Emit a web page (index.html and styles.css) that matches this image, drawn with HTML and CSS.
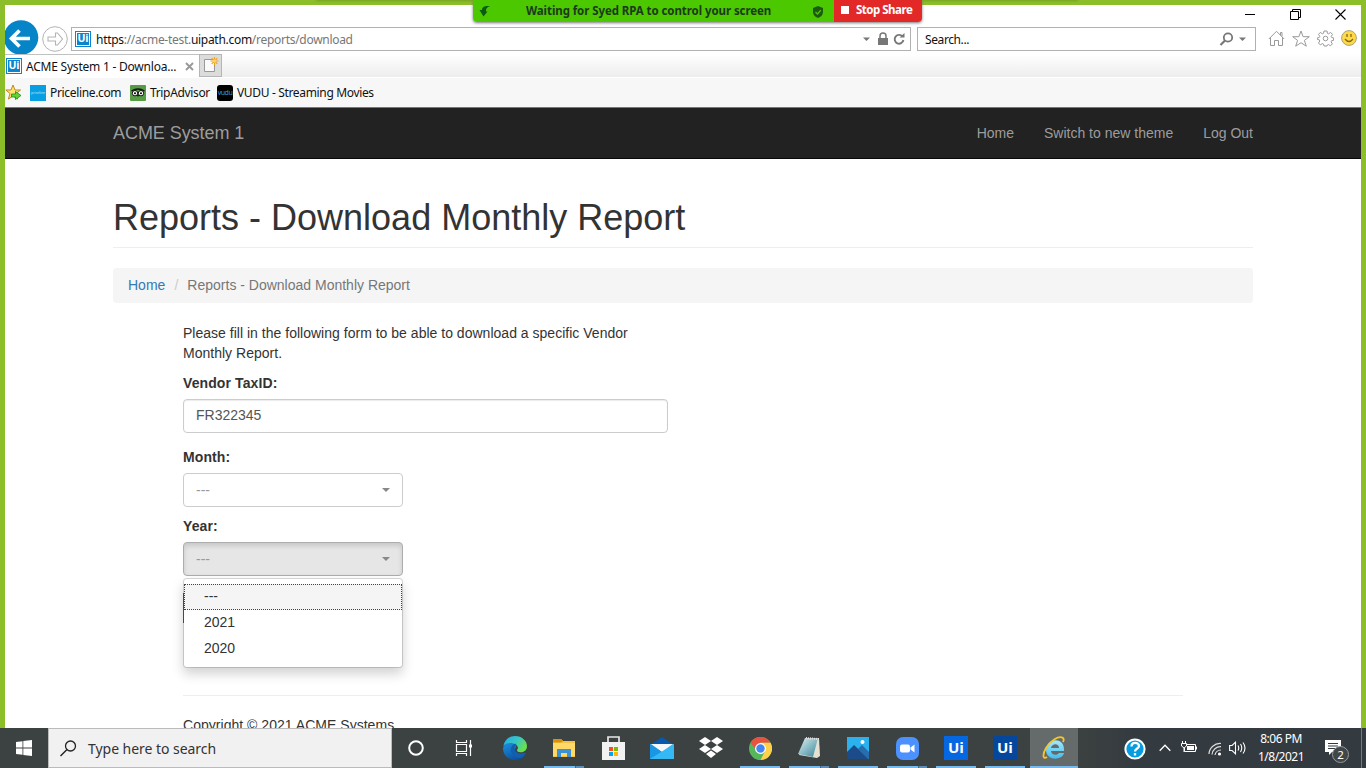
FILE: index.html
```html
<!DOCTYPE html>
<html lang="en">
<head>
<meta charset="utf-8">
<title>ACME System 1 - Download Monthly Report</title>
<link rel="stylesheet" href="styles.css">
</head>
<body>
<div class="desktop">
  <div class="share-tab"></div>
  <div class="share-bar">
    <div class="share-msg">
      <svg class="share-arrow" width="12" height="12" viewBox="0 0 12 12"><path d="M11 1C5.500 .5 3 2 3 5H.5l4 6.500 4-5H7C6.500 4 8 2 11 1Z" fill="#0b5c12"/></svg>
      <span class="share-text">Waiting for Syed RPA to control your screen</span>
      <svg class="share-shield" width="12" height="12" viewBox="0 0 12 12"><path d="M6 0 11 2V6C11 9 9 11 6 12 3 11 1 9 1 6V2Z" fill="#1c5a14"/><path d="m3.500 6 2 2 3.300-3.700" fill="none" stroke="#4bc800" stroke-width="1.300"/></svg>
    </div>
    <div class="share-stop"><i class="stop-square"></i><span>Stop Share</span></div>
  </div>

  <div class="browser">
    <div class="titlebar">
      <svg width="11" height="11" viewBox="0 0 11 11"><path d="M0 5.500H10" stroke="#000"/></svg>
      <svg width="11" height="11" viewBox="0 0 11 11"><path d="M.5 2.500h8v8h-8zM2.500 2.500v-2h8v8h-2" fill="none" stroke="#000"/></svg>
      <svg width="11" height="11" viewBox="0 0 11 11"><path d="m.5.500 10 10m0-10-10 10" stroke="#000" stroke-width="1.100"/></svg>
    </div>
    <div class="address-row">
      <svg class="back" width="34" height="34" viewBox="0 0 34 34"><circle cx="16" cy="17.500" r="17.300" fill="#0584c7"/><path d="M25 18.500H7m7.500-8-8 8 8 8" fill="none" stroke="#fff" stroke-width="3.700"/></svg>
      <svg class="forward" width="26" height="26" viewBox="0 0 26 26"><circle cx="13" cy="13" r="12.300" fill="#fff" stroke="#b4b4b4"/><path d="M6 11h7.500V7h2l5 6-5 6h-2v-4H6z" fill="#fff" stroke="#b4b4b4" stroke-width="1.100"/></svg>
      <div class="address">
        <span class="fav-ui">Ui</span>
        <span class="url"><b>https</b>://acme-test.<b>uipath.com</b>/reports/download</span>
        <svg class="addr-icons" width="44" height="16" viewBox="0 0 44 16"><path d="M0 6.500h7L3.500 10z" fill="#777"/><path d="M15 7h10v7H15z" fill="#777"/><path d="M17 8V5a3 3 0 0 1 6 0v3" fill="none" stroke="#777" stroke-width="1.500"/><path d="M39.500 5.500A4.400 4.400 0 1 0 40.400 9" fill="none" stroke="#777" stroke-width="1.900"/><path d="M36.500 6.500h5V2z" fill="#777"/></svg>
      </div>
      <div class="search">
        <span>Search...</span>
        <svg width="28" height="16" viewBox="0 0 28 16"><circle cx="9" cy="6.500" r="4.200" fill="none" stroke="#777" stroke-width="1.800"/><path d="m6 9.500-4.500 4.500" stroke="#777" stroke-width="2.200"/><path d="M20 6.500h7L23.500 10z" fill="#777"/></svg>
      </div>
      <div class="tools">
        <svg width="17" height="17" viewBox="0 0 17 17"><path d="M.8 9 8.500 1.300 16.200 9M2.500 7.500v8h4v-5h4v5h4v-8M12.500 5V2.500h1.500v4" fill="none" stroke="#999"/></svg>
        <svg width="18" height="17" viewBox="0 0 18 17"><path d="m9 1 2.100 5.700h6.200l-4.900 3.700 1.900 5.800L9 12.700l-5.300 3.500 1.900-5.800L.7 6.700h6.200z" fill="none" stroke="#999"/></svg>
        <svg width="17" height="17" viewBox="0 0 17 17"><path d="m7 1h3l.4 2.300 1.200.5 2-1.400 1.900 2-1.300 2 .4 1 2 .5v2.400l-2 .4-.5 1.200 1.300 2-1.900 1.900-2-1.300-1.100.5L10 16H7l-.5-1.900-1.200-.5-2 1.300-1.800-1.900 1.300-2-.5-1.200-2-.4V7.900l2-.5.500-1-1.300-2 1.800-2 2 1.400 1.200-.5z" fill="none" stroke="#999"/><circle cx="8.500" cy="8.500" r="2.300" fill="none" stroke="#999"/></svg>
        <svg width="16" height="16" viewBox="0 0 16 16"><circle cx="8" cy="8" r="7.400" fill="#ffda47" stroke="#a9a27b"/><path d="M6 4v3M10 4v3M4 9q4 5 8 0" fill="none" stroke="#846819" stroke-width="1.300"/></svg>
      </div>
    </div>
    <div class="tab-row">
      <div class="tab">
        <span class="fav-ui">Ui</span><span class="tab-title">ACME System 1 - Downloa...</span>
        <svg width="9" height="9" viewBox="0 0 9 9"><path d="m1 1 7 7m0-7-7 7" stroke="#999" stroke-width="1.900"/></svg>
      </div>
      <div class="new-tab"><svg width="16" height="17" viewBox="0 0 16 17"><path d="M.5 3.500h10v12H.5z" fill="#fafafa" stroke="#999"/><path d="M10.500 1v8M6.500 5h8M7.700 2.200l5.600 5.600m0-5.600L7.700 7.800" stroke="#eda326" stroke-width="1.200"/><circle cx="10.500" cy="5" r="1.700" fill="#ffd55d"/></svg></div>
    </div>
    <div class="favorites">
      <svg class="fav-add" width="17" height="17" viewBox="0 0 17 17"><path d="m8 1 2 5h5.500l-4.400 3.500 1.600 5.500L8 12l-4.600 3 1.600-5.500L.8 6H6z" fill="#ffe36c" stroke="#bd8928"/><path d="M6.500 10h4V7.500l5.500 4-5.500 4V13h-4z" fill="#62d531" stroke="#218a1d" stroke-width=".8"/></svg>
      <span class="bookmark b1"><i class="fav-price"><em>priceline</em></i>Priceline.com</span>
      <span class="bookmark b2"><svg width="16" height="16" viewBox="0 0 16 16"><rect width="16" height="16" rx="1" fill="#579b45"/><path d="M1.500 6Q8 2 14.500 6" fill="none" stroke="#111" stroke-width="1.400"/><circle cx="5" cy="8.200" r="2.700" fill="#fff" stroke="#111"/><circle cx="11" cy="8.200" r="2.700" fill="#fff" stroke="#111"/><circle cx="5" cy="8.200" r="1"/><circle cx="11" cy="8.200" r="1"/><path d="m7 10 1 2 1-2"/></svg>TripAdvisor</span>
      <span class="bookmark b3"><i class="fav-vudu">vudu</i>VUDU - Streaming Movies</span>
    </div>

    <div class="page">
      <nav class="navbar"><div class="container nav-inner"><a class="brand">ACME System 1</a><div class="nav-links"><a>Home</a><a>Switch to new theme</a><a>Log Out</a></div></div></nav>
      <main class="container">
        <h1 class="page-header">Reports - Download Monthly Report</h1>
        <div class="breadcrumb"><a class="crumb-link">Home</a><span class="slash">/</span><span class="crumb-active">Reports - Download Monthly Report</span></div>
        <div class="form">
          <p class="intro">Please fill in the following form to be able to download a specific Vendor Monthly Report.</p>
          <label class="label">Vendor TaxID:</label>
          <div class="input">FR322345</div>
          <label class="label month">Month:</label>
          <div class="select"><span>---</span><i class="caret"></i></div>
          <label class="label year">Year:</label>
          <div class="year-group">
            <div class="select open"><span>---</span><i class="caret"></i></div>
            <div class="menu"><div class="item focused">---</div><div class="item">2021</div><div class="item">2020</div></div>
          </div>
          <div class="submit"></div>
          <hr class="rule">
          <p class="copyright">Copyright © 2021 ACME Systems</p>
        </div>
      </main>
    </div>
  </div>

  <div class="taskbar">
    <div class="start"><svg width="16" height="16" viewBox="0 0 16 16"><path d="m0 2 6.500-.8v6.300H0zM7.300 1.100 16 0v7.500H7.300zM0 8.400h6.500v6.300L0 13.900zM7.300 8.400H16V16l-8.700-1.100z" fill="#fff"/></svg></div>
    <div class="task-search"><svg width="17" height="17" viewBox="0 0 17 17"><circle cx="10.500" cy="6" r="5" fill="none" stroke="#222" stroke-width="1.300"/><path d="m7 9.500-6.500 6.500" stroke="#222" stroke-width="1.400"/></svg><span>Type here to search</span></div>
    <div class="sys"><svg width="18" height="18" viewBox="0 0 18 18"><circle cx="9" cy="9" r="6.800" fill="none" stroke="#fff" stroke-width="2"/></svg></div>
    <div class="sys"><svg width="18" height="18" viewBox="0 0 18 18"><path d="M1.500 1v2.500h10V1M1.500 17v-2.500h10V17M1.500 5.500h10v7h-10zM15.500 1v16" fill="none" stroke="#fff" stroke-width="1.200"/><path d="M14 5.500h3v3h-3z" fill="#fff"/></svg></div>
    <div class="apps">
      <div class="app"><svg width="24" height="24" viewBox="0 0 24 24"><defs><linearGradient id="edgeTop" x1="0" x2="1" y1="0" y2=".5"><stop stop-color="#27a8e8"/><stop offset=".55" stop-color="#36c6c8"/><stop offset="1" stop-color="#69df50"/></linearGradient><linearGradient id="edgeBase" x1="0" x2=".6" y1="0" y2="1"><stop stop-color="#1b92df"/><stop offset="1" stop-color="#0c4e9e"/></linearGradient></defs><path d="M0 12c1-4 5-6 9-5 4 0 5 4 3 6-2 4 4 7 11 4-2 5-6 7-11 7C5 24 0 19 0 12Z" fill="url(#edgeBase)"/><path d="M.3 10C2 3 7 0 12 0c7 0 12 5 12 10 0 5-4 7-8 6-3-1-2-2-1-4C15 8 6 4 .3 10Z" fill="url(#edgeTop)"/><path d="M8.500 11c-2.500 6 3 12 9 11 3-1 5-4 5-6-5 3-11 1-11-4 0-2 1-3 2-4-2-1-4 1-5 3Z" fill="#125fae"/></svg></div>
      <div class="app running split"><svg width="22" height="20" viewBox="0 0 22 20"><path d="M0 1h8l2 2h12v16H0z" fill="#f6c248"/><path d="M0 1h8l2 2-2 1.500H0z" fill="#d99206"/><path d="M0 5h22v13H0z" fill="#ffd968"/><path d="M4 11h14v8h-4v-4H8v4H4z" fill="#3c91d2"/></svg></div>
      <div class="app"><svg width="24" height="24" viewBox="0 0 24 24"><path d="M7 7V1h11v6" fill="none" stroke="#e8e8e8" stroke-width="1.700"/><path d="M1 6h23v18H1z" fill="#f2f2f2"/><path d="M8 11h4v4H8z" fill="#f25022"/><path d="M13 11h4v4h-4z" fill="#7fba00"/><path d="M8 16h4v4H8z" fill="#00a4ef"/><path d="M13 16h4v4h-4z" fill="#ffb900"/></svg></div>
      <div class="app"><svg width="24" height="24" viewBox="0 0 24 24"><path d="m0 9 12-8 12 8z" fill="#0759ad"/><path d="M0 8h24v15H0z" fill="#2ba9ed"/><path d="M1 8h22L12 16z" fill="#f5f7fa"/><path d="m0 8 12 8-12 7z" fill="#1b96e3"/><path d="m24 8-24 15h24z" fill="#35b9f4"/></svg></div>
      <div class="app"><svg width="24" height="24" viewBox="0 0 24 24"><path d="m6 1 6 4-6 4-6-4zM18 1l6 4-6 4-6-4zM6 9l6 4-6 4-6-4zM18 9l6 4-6 4-6-4zM12 14.500l5 3.500-5 4-5-4z" fill="#fff"/></svg></div>
      <div class="app running"><svg width="23" height="23" viewBox="0 0 24 24"><circle cx="12" cy="12" r="12" fill="#57b65a"/><path d="M1.600 6A12 12 0 0 1 22.400 6H12L8 14z" fill="#e85242"/><path d="M22.400 6A12 12 0 0 1 12 24L17 14 12 6z" fill="#ffd14b"/><circle cx="12" cy="12" r="5.700" fill="#fff"/><circle cx="12" cy="12" r="4.400" fill="#4385f5"/></svg></div>
      <div class="app running split"><svg width="24" height="24" viewBox="0 0 24 24"><defs><linearGradient id="note" x2="1" y2="1"><stop stop-color="#dff4f4"/><stop offset="1" stop-color="#378398"/></linearGradient></defs><path d="M9 2h13l1 18-3 2L2 19z" fill="#e5e1d2"/><path d="M8 2h13l-5 19-15-3z" fill="url(#note)"/><path d="m9 2 12 1" stroke="#ddd" stroke-width="2" stroke-dasharray="1 1"/></svg></div>
      <div class="app running"><svg width="22" height="22" viewBox="0 0 22 22"><path d="M0 0h22v22H0z" fill="#2bb1ed"/><path d="m0 15 7-7 15 14H0z" fill="#1b4b89"/><path d="m11 12 4-4 7 7v7h-1z" fill="#286dad"/><circle cx="15.500" cy="5" r="2" fill="#fff"/></svg></div>
      <div class="app running split"><svg width="23" height="23" viewBox="0 0 23 23"><rect width="23" height="23" rx="7" fill="#4b91ff"/><rect x="4" y="7.500" width="10" height="8" rx="2" fill="#fff"/><path d="m14.500 10.500 4-3v8l-4-3z" fill="#fff"/></svg></div>
      <div class="app running"><span class="ui-tile">Ui</span></div>
      <div class="app running"><span class="ui-tile dark">Ui</span></div>
      <div class="app running active"><svg width="24" height="24" viewBox="0 0 24 24"><defs><linearGradient id="ieBlue" x2="0" y2="1"><stop stop-color="#a5e9fb"/><stop offset="1" stop-color="#42bcec"/></linearGradient></defs><path fill-rule="evenodd" d="M22 15H9c0 4 6 5 8 2h5c-2 8-18 8-18-3C4 2 23 0 22 15ZM9 12h8c0-5-7-5-8 0Z" fill="url(#ieBlue)"/><path d="M5 21C1 24 0 19 4 12 8 5 17-1 21 2c1 1 1 2 0 4" fill="none" stroke="#f5c52a" stroke-width="1.800"/></svg></div>
    </div>
    <div class="tray">
      <svg class="help" width="22" height="22" viewBox="0 0 22 22"><circle cx="11" cy="11" r="9.600" fill="#069de0" stroke="#fff" stroke-width="2"/><path d="M7.500 8.500c0-5 7.500-4.500 7.500-.5 0 2.500-4 2.500-4 5.500M11 15v2.500" fill="none" stroke="#fff" stroke-width="2.300"/></svg>
      <svg class="chevron" width="12" height="8" viewBox="0 0 12 8"><path d="m.7 6.700 5.300-5.500 5.300 5.500" fill="none" stroke="#fff" stroke-width="1.300"/></svg>
      <svg class="battery" width="16" height="14" viewBox="0 0 16 14"><path d="M5 3.500h9.500v7H3.500V7M15.500 5.500v3M1.500 0v2m3-2v2M.5 2.500h5V5L3.500 6.500h-1L.5 5zM3 6v5" fill="none" stroke="#fff"/><path d="M6 5h7v4H6z" fill="#fff"/></svg>
      <svg class="wifi" width="14" height="14" viewBox="0 0 14 14"><g fill="none" stroke="#ddd" stroke-width="1.200"><path d="M1 12A11 11 0 0 1 13 1.500"/><path d="M4 12.500A8.500 8.500 0 0 1 13 4.700"/><path d="M7 13A6 6 0 0 1 13 8"/></g><circle cx="11.500" cy="12" r="1.600" fill="#fff"/></svg>
      <svg class="sound" width="17" height="14" viewBox="0 0 17 14"><path d="M.6 4.500h2.500l3.400-3.300v11.600L3.100 9.500H.6zM9 4.500q1.500 2.500 0 5M11.500 3q2.500 4 0 8M14 1.500q4 5.500 0 11" fill="none" stroke="#fff" stroke-width="1.100"/></svg>
      <div class="clock"><span>8:06 PM</span><span class="date">1/8/2021</span></div>
      <div class="notify"><svg width="17" height="16" viewBox="0 0 17 16"><path d="M0 0h16v12H7l-3 3v-3H0z" fill="#fff"/><path d="M3 3.500h10M3 6h10M3 8.500h7" stroke="#343b40"/></svg><span class="badge">2</span></div>
      <div class="peek"></div>
    </div>
  </div>
</div>
</body>
</html>
```
FILE: styles.css
```css
* { box-sizing: border-box; }
body { margin: 0; font-family: "Liberation Sans", Arial, sans-serif; }
svg { display: block; flex: none; }
.desktop { position: relative; width: 1366px; height: 768px; overflow: hidden; background: #8cbe29; display: flex; flex-direction: column; }
.share-tab { position: absolute; left: 316px; top: -1px; width: 762px; height: 1px; box-shadow: 0 0 3px #456210; }
.share-bar { position: absolute; z-index: 3; left: 473px; top: 0; width: 449px; height: 22px; display: flex; border-radius: 0 0 4px 4px; overflow: hidden; font: bold 12px/22px "Noto Sans", sans-serif; box-shadow: 0 1px 3px #777; white-space: nowrap; }
.share-msg { width: 361px; background: #4bc800; color: #1c3a1c; display: flex; align-items: center; padding-left: 6px; }
.share-arrow { margin-top: -1px; }
.share-shield { margin-top: 2px; }
.share-text { width: 245px; margin: 0 41px 0 35px; font-size: 11.500px; letter-spacing: -.08px; }
.share-stop { flex: 1; background: #e32828; color: #fff; display: flex; align-items: center; padding: 0 0 2px 7px; gap: 7px; font-size: 11.500px; letter-spacing: -.5px; }
.stop-square { width: 8px; height: 8px; background: #fff; }

.browser { flex: none; height: 728px; padding: 5px 5px 0; display: flex; flex-direction: column; overflow: hidden; }
.browser > div { flex: none; background: #fff; }
.titlebar { height: 15px; display: flex; justify-content: flex-end; gap: 34px; padding: 4px 15px 0 0; }
.address-row { height: 34px; display: flex; align-items: flex-start; }
.forward { margin: 6px 0 0 3px; }
.address, .search { height: 24px; border: 1px solid #b1b1b1; background: #fff; margin-top: 7px; display: flex; align-items: center; font: 12px/20px "Noto Sans", sans-serif; color: #111; }
.address { width: 840px; margin-left: 3px; padding: 0 3px 0 3px; }
.address .url, .search span { margin-top: 2px; }
.fav-ui { flex: none; width: 16px; height: 16px; border: 1px solid #0c85cc; box-shadow: inset 0 0 0 1px #fff; background: #0c85cc; color: #fff; font: bold 10.500px/13px "Open Sans", sans-serif; text-align: center; }
.url { margin-left: 5px; color: #777; letter-spacing: -.29px; white-space: nowrap; }
.url b { font-weight: 400; color: #111; }
.addr-icons { margin-left: auto; }
.search { width: 339px; margin-left: 6px; padding: 0 8px 0 7px; justify-content: space-between; letter-spacing: -.4px; }
.tools { display: flex; gap: 7px; margin: 10px 0 0 12px; }
.browser > .tab-row { height: 23px; display: flex; background: linear-gradient(#fff, #ededed); }
.tab { width: 194px; height: 23px; background: #fff; border-top: 1px solid #c1c1c1; display: flex; align-items: center; padding-left: 1px; font: 12px/20px "Noto Sans", sans-serif; color: #111; white-space: nowrap; }
.tab-title { width: 154px; margin: 2px 5px 0 4px; letter-spacing: -.22px; }
.new-tab { width: 23px; border: 1px solid #b5b5b5; background: #dcdcdc; padding: 1px 0 0 4px; }
.browser > .favorites { height: 31px; background: #f7f7f7; border-top: 1px solid #fff; border-bottom: 1px solid #777; display: flex; align-items: center; font: 12px/20px "Noto Sans", sans-serif; color: #111; white-space: nowrap; }
.bookmark { display: flex; gap: 4px; align-items: center; letter-spacing: -.34px; padding-top: 1px; }
.b1 { width: 100px; margin-left: 8px; }
.b2 { width: 87px; }
.fav-price { width: 16px; height: 16px; background: #079ee2; color: #bce8ff; overflow: hidden; font-style: normal; }
.fav-price em { display: block; font: 3.500px/16px "Noto Sans", sans-serif; letter-spacing: 0; text-align: center; }
.fav-vudu { width: 16px; height: 16px; border-radius: 3px; background: #000; color: #2b9bea; font: 7px/15px "Noto Sans", sans-serif; text-align: center; letter-spacing: -.5px; }

.page { height: 620px; overflow: hidden; color: #333; font-size: 14px; line-height: 20px; }
.container { width: 1140px; margin: 0 auto 0 108px; }
.navbar { height: 51px; background: #222; border-bottom: 1px solid #080808; color: #9d9d9d; }
.nav-inner { display: flex; justify-content: space-between; align-items: center; height: 50px; }
.brand { font-size: 18px; letter-spacing: -.06px; }
.nav-links { display: flex; gap: 30px; }
.page-header { height: 50px; margin: 39px 0 20px; padding-bottom: 9px; border-bottom: 1px solid #eee; font-size: 36px; font-weight: 400; line-height: 39.600px; }
.breadcrumb { height: 35px; padding: 7px 15px; border-radius: 4px; background: #f5f5f5; display: flex; color: #777; }
.crumb-link { color: #337ab7; }
.slash { width: 22px; text-align: center; color: #ccc; }
.form { margin: 20px 70px 0; }
.intro { width: 485px; margin: 0 0 10px; letter-spacing: .015px; }
.label { display: block; font-weight: 700; margin-bottom: 6px; letter-spacing: .1px; }
.input { width: 485px; height: 34px; border: 1px solid #ccc; border-radius: 4px; box-shadow: inset 0 1px 1px #ececec; padding: 5px 12px; color: #555; }
.month { margin-top: 14px; }
.year { margin-top: 9px; }
.select { width: 220px; height: 34px; border: 1px solid #ccc; border-radius: 4px; background: #fff; color: #999; padding: 0 12px; display: flex; align-items: center; justify-content: space-between; }
.open { background: #e6e6e6; border-color: #adadad; box-shadow: inset 0 3px 5px #0002; }
.caret { border: 4px solid transparent; border-top-color: #888; border-bottom: 0; }
.year-group { position: relative; }
.menu { position: absolute; z-index: 1; left: 0; top: 36px; width: 220px; height: 90px; padding: 5px 0; background: #fff; background-clip: padding-box; border: 1px solid #00000026; border-radius: 4px; box-shadow: 0 6px 12px #0000002d; color: #333; }
.item { height: 26px; padding: 2px 20px; line-height: 20px; color: #333; }
.focused { padding: 1px 19px; border: 1px dotted #444; background: #f5f5f5; }
.submit { width: 70px; height: 30px; margin-top: 17px; border-left: 1px solid #2e6da4; }
.rule { margin: 72px 0 19px; border: 0; border-top: 1px solid #eee; }
.copyright { margin: 0; letter-spacing: .03px; }

.taskbar { flex: none; height: 40px; background: #3c4141; display: flex; color: #fff; font-family: "Noto Sans", sans-serif; }
.start, .sys { width: 48px; display: grid; place-items: center; }
.task-search { width: 344px; background: #f1f1f1; border: 1px solid #bbb; display: flex; align-items: center; padding-left: 11px; gap: 11px; color: #333; font-size: 14px; letter-spacing: -.04px; }
.apps { display: flex; gap: 1px; margin-left: 3px; }
.app { position: relative; width: 48px; display: grid; place-items: center; }
.running::after { content: ""; position: absolute; left: 4px; bottom: 0; width: 40px; height: 2px; background: #76b9ed; }
.split::after { background: linear-gradient(90deg, #76b9ed 31px, #3d6788 31px, #3d6788 32px, #5b8db7 32px); }
.active { background: #656a6b; }
.active::after { left: 0; width: 48px; }
.ui-tile { width: 24px; height: 24px; background: #0567e2; font: bold 15px/23px "Open Sans", sans-serif; text-align: center; }
.ui-tile.dark { background: #04479d; }
.tray { flex: 1; display: flex; align-items: center; background: linear-gradient(90deg, #3c4141, #343b40 20%); }
.help { margin: 2px 0 0 46px; }
.chevron { margin-left: 13px; }
.battery { margin-left: 10px; }
.wifi { margin-left: 11px; margin-top: 2px; }
.sound { margin-left: 7px; }
.clock { width: 60px; margin-left: 5px; display: flex; flex-direction: column; align-items: center; font-size: 12px; line-height: 18px; letter-spacing: -.5px; white-space: nowrap; }
.notify { position: relative; margin-left: 14px; }
.badge { position: absolute; left: 7px; top: 6px; width: 17px; height: 17px; border: 1px solid #999; border-radius: 50%; background: #414649; font-size: 11.500px; line-height: 15px; text-align: center; }
.peek { width: 1px; height: 40px; margin-left: auto; margin-right: 4px; background: #75797b; }
```
